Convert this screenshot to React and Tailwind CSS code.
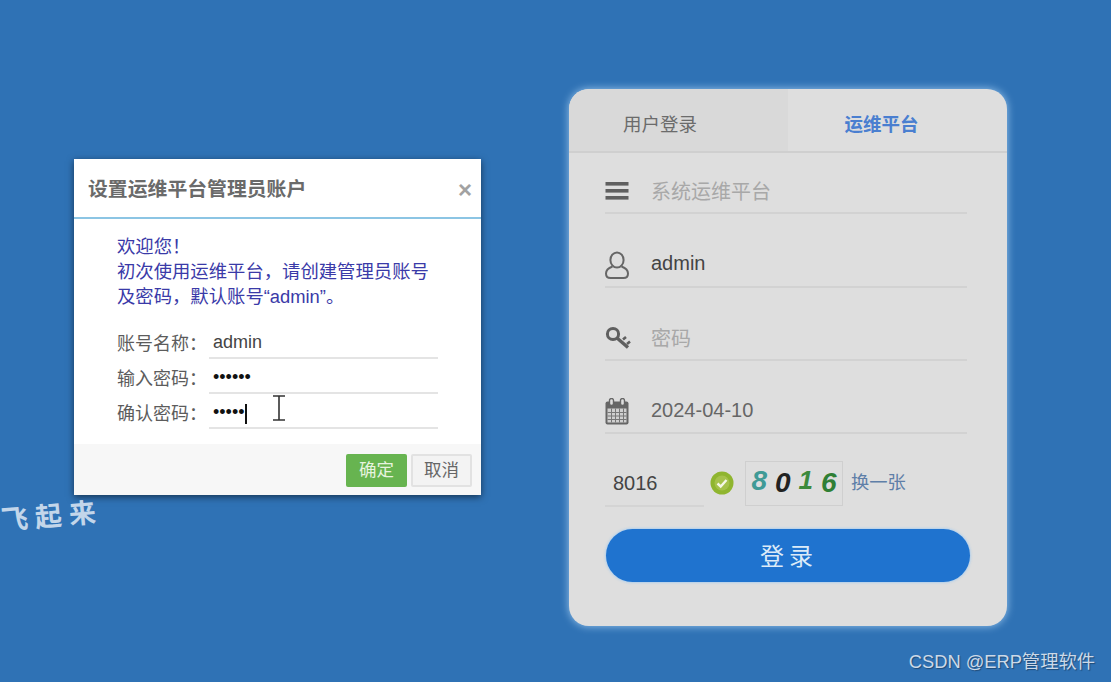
import React from 'react';

const FONT = "font-['Liberation_Sans','Noto_Sans_CJK_SC',sans-serif]";

function MenuIcon() {
  return (
    <svg width="24" height="18" viewBox="0 0 24 18" className="block">
      <rect x="0.5" y="0" width="23" height="3.6" fill="#5f5f5f" />
      <rect x="0.5" y="7" width="23" height="3.6" fill="#5f5f5f" />
      <rect x="0.5" y="14" width="23" height="3.6" fill="#5f5f5f" />
    </svg>
  );
}

function UserIcon() {
  return (
    <svg width="24" height="28" viewBox="0 0 24 28" fill="none" stroke="#666" strokeWidth="2" className="block">
      <ellipse cx="12" cy="9" rx="6.6" ry="7.6" />
      <path d="M7.5 15.5C3.5 17 1 19.5 1 22.5C1 25.5 3 27 5.5 27H18.5C21 27 23 25.5 23 22.5C23 19.5 20.5 17 16.5 15.5" />
    </svg>
  );
}

function KeyIcon() {
  return (
    <svg width="26" height="24" viewBox="0 0 26 24" fill="none" stroke="#5f5f5f" className="block">
      <circle cx="8" cy="8" r="5.6" strokeWidth="3" />
      <path d="M12 12L23 21.5" strokeWidth="3.4" />
      <path d="M18 13.5L21 11M22 18L25 15.5" strokeWidth="2.6" />
    </svg>
  );
}

function CalendarIcon() {
  const cols = [6, 10, 14, 18];
  const rows = [14, 17.5, 21];
  return (
    <svg width="24" height="27" viewBox="0 0 24 27" className="block">
      <rect x="0.5" y="3.5" width="23" height="23" rx="2" fill="#666" />
      <rect x="2.5" y="10.5" width="19" height="14" fill="#cfcfcf" />
      {cols.map(x => <rect key={x} x={x} y="10.5" width="1" height="14" fill="#777" />)}
      {rows.map(y => <rect key={y} x="2.5" y={y} width="19" height="1" fill="#777" />)}
      <rect x="4.5" y="0.5" width="4" height="7" rx="2" fill="#dedede" stroke="#666" strokeWidth="1.4" />
      <rect x="15.5" y="0.5" width="4" height="7" rx="2" fill="#dedede" stroke="#666" strokeWidth="1.4" />
    </svg>
  );
}

function CheckBadge() {
  return (
    <svg width="24" height="24" viewBox="0 0 24 24" className="block">
      <circle cx="12" cy="12" r="11.5" fill="#8fb52f" />
      <circle cx="12" cy="12" r="7.5" fill="#a5c24a" />
      <path d="M7.5 12.5L10.7 15.5L16.5 9" fill="none" stroke="#f4f7e6" strokeWidth="2.4" />
    </svg>
  );
}

function IBeam() {
  return (
    <svg width="16" height="26" viewBox="0 0 16 26" fill="none" stroke="#333" strokeWidth="1.6" className="block">
      <path d="M2 1H14M8 1V25M2 25H14" />
    </svg>
  );
}

function FormRow({ label, children }) {
  return (
    <div className="flex items-end h-[35px]">
      <span className="w-[92px] pb-[2px] text-[18px] leading-[26px] text-[#5c5c5c] whitespace-nowrap">{label}：</span>
      <div className="relative w-[229px] h-[35px] pl-[4px] pb-[2px] flex items-end border-b-2 border-[#e4e4e4] text-[18px] leading-[26px] text-[#444]">
        {children}
      </div>
    </div>
  );
}

function SetupDialog() {
  return (
    <div className="w-[407px] h-[336px] mt-[159px] ml-[74px] shrink-0 flex flex-col bg-white shadow-[0_2px_7px_rgba(0,0,0,0.55)]">
      <div className="h-[60px] shrink-0 flex items-center justify-between pl-[14px] pr-[9px] pt-[4px] border-b-2 border-[#8cc5e4]">
        <span className="text-[19.85px] font-bold text-[#6a6a6a] whitespace-nowrap">设置运维平台管理员账户</span>
        <span className="text-[24px] font-bold leading-none text-[#a2a2a2]">×</span>
      </div>
      <div className="flex-1 pl-[43px] pt-[15px]">
        <div className="text-[18.35px] leading-[25px] text-[#3a3aa8] whitespace-nowrap">
          <p>欢迎您！</p>
          <p>初次使用运维平台，请创建管理员账号</p>
          <p>及密码，默认账号“admin”。</p>
        </div>
        <div className="mt-[15px]">
          <FormRow label="账号名称">admin</FormRow>
          <FormRow label="输入密码"><span className="text-[#111]">••••••</span></FormRow>
          <FormRow label="确认密码">
            <span className="text-[#111]">•••••</span>
            <span className="w-[2px] h-[20px] mb-[1px] bg-[#111]" />
            <span className="absolute left-[62px] top-[1px]"><IBeam /></span>
          </FormRow>
        </div>
      </div>
      <div className="h-[51px] shrink-0 flex items-center justify-end gap-[4px] pr-[9px] pt-[2px] bg-[#f7f7f7]">
        <button className="w-[61px] h-[33px] rounded-[2px] bg-[#67b450] text-[17.5px] text-[#e6f3df]">确定</button>
        <button className="w-[61px] h-[33px] rounded-[2px] bg-[#f3f3f3] border-2 border-[#e2e2e2] text-[17.5px] text-[#666]">取消</button>
      </div>
    </div>
  );
}

function Field({ icon, className, children }) {
  return (
    <div className={`h-[44px] flex items-center border-b-2 border-[#d2d2d2] ${className}`}>
      <span className="w-[46px] shrink-0">{icon}</span>
      {children}
    </div>
  );
}

function Captcha() {
  return (
    <div className="w-[98px] h-[45px] flex items-center justify-center gap-[8px] border border-[#cfcfcf] italic font-bold text-[28px] leading-none">
      <span className="text-[#3f9a96] -translate-y-[2px]">8</span>
      <span className="text-[#222]">0</span>
      <span className="text-[#3c8a3c] -translate-y-[3px] text-[26px]">1</span>
      <span className="text-[#2f7f35]">6</span>
    </div>
  );
}

function LoginCard() {
  return (
    <div className="w-[438px] h-[537px] mt-[89px] ml-[88px] shrink-0 rounded-[20px] overflow-hidden bg-[#dedede] shadow-[0_0_9px_rgba(190,225,255,0.75)]">
      <div className="h-[64px] flex border-b-2 border-[#cfcfcf] text-[18.5px]">
        <div className="w-[219px] bg-[#d9d9d9] pl-[54px] pt-[10px] flex items-center text-[#6b6b6b]">用户登录</div>
        <div className="flex-1 flex items-center justify-center pr-[32px] pt-[10px] font-bold text-[#4a7fd0]">运维平台</div>
      </div>
      <div className="pl-[36px] pr-[40px] text-[20px]">
        <Field icon={<MenuIcon />} className="mt-[17px]">
          <span className="pt-[2px] text-[#a8a8a8]">系统运维平台</span>
        </Field>
        <Field icon={<UserIcon />} className="mt-[30px]">
          <span className="pb-[4px] text-[#444]">admin</span>
        </Field>
        <Field icon={<KeyIcon />} className="mt-[29px]">
          <span className="pt-[2px] text-[#a8a8a8]">密码</span>
        </Field>
        <Field icon={<CalendarIcon />} className="mt-[29px]">
          <span className="pb-[2px] text-[#666]">2024-04-10</span>
        </Field>
        <div className="mt-[25px] flex items-center h-[48px]">
          <div className="w-[99px] h-[47px] flex items-center pl-[8px] pt-[2px] border-b-2 border-[#d4d4d4] text-[#444]">8016</div>
          <span className="ml-[6px]"><CheckBadge /></span>
          <span className="ml-[11px]"><Captcha /></span>
          <span className="ml-[8px] text-[18.3px] text-[#5f7fa8] whitespace-nowrap">换一张</span>
        </div>
      </div>
      <div className="pl-[37px] mt-[22px]">
        <button className="w-[364px] h-[53px] pt-[3px] pl-[2px] rounded-full bg-[#1f73cf] text-[24px] tracking-[5px] text-[#dcebf8] shadow-[0_0_3px_rgba(120,190,255,0.9)]">登录</button>
      </div>
    </div>
  );
}

export default function App() {
  return (
    <div className={`relative w-[1111px] h-[682px] overflow-hidden flex items-start bg-[#2f72b5] ${FONT}`}>
      <SetupDialog />
      <LoginCard />

      {/* 飞起来 handwriting over the page */}
      <div className="absolute left-[1px] top-[504px] flex items-center gap-[7px] -rotate-[5deg] text-[27px] font-bold leading-none text-[#c3d6ea]">
        <span>飞</span>
        <span>起</span>
        <span>来</span>
      </div>

      {/* watermark */}
      <div className="absolute right-[16px] bottom-[8px] text-[18.3px] leading-[24px] text-[#ccd9e8] whitespace-nowrap [text-shadow:1px_1px_1px_rgba(0,0,0,0.35)]">
        CSDN @ERP管理软件
      </div>
    </div>
  );
}
